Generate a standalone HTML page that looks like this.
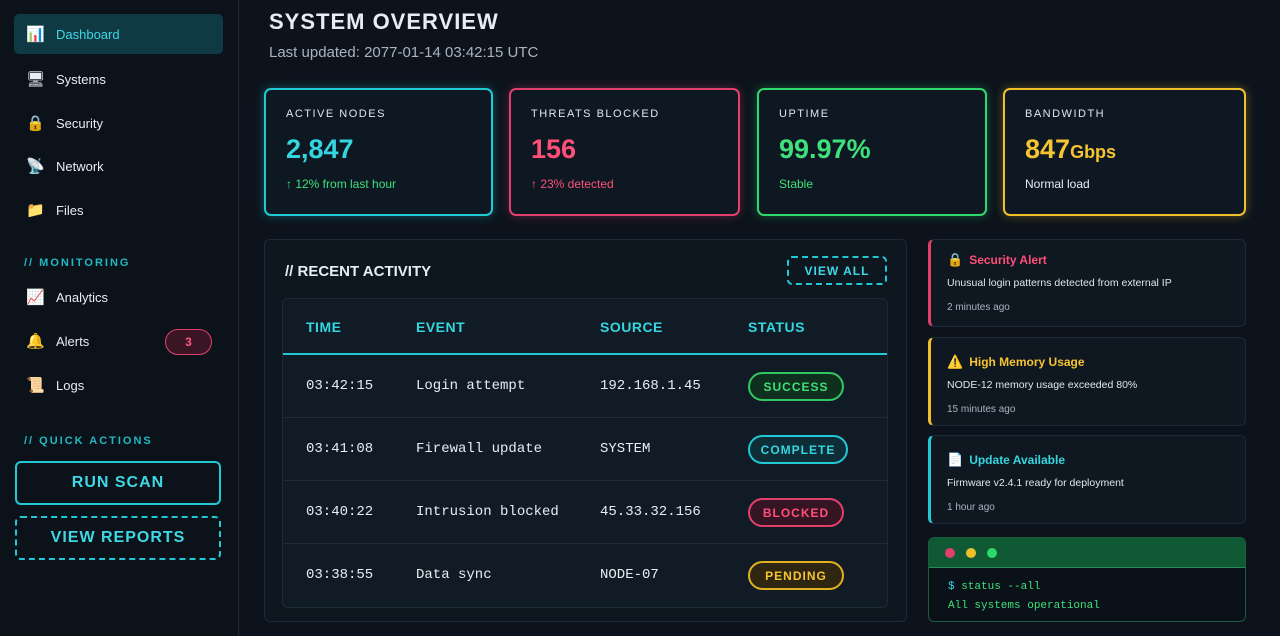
<!DOCTYPE html>
<html><head><meta charset="utf-8"><style>
*{box-sizing:border-box;margin:0;padding:0}
body{width:1280px;height:636px;overflow:hidden;background:#0c131c;font-family:"Liberation Sans",sans-serif;color:#e6edf3;position:relative}
.abs{position:absolute}
.side{left:0;top:0;width:239px;height:636px;background:#0b121a;border-right:1px solid #1f2a35}
.nav{position:absolute;left:14px;width:209px;height:40px;display:flex;align-items:center;padding-left:12px;font-size:13px;color:#e6edf3}
.nav .ic{width:18px;font-size:15px;margin-right:12px;text-align:center}
.sec{position:absolute;left:24px;font-size:11px;letter-spacing:2px;color:#22b8c4;font-weight:bold}
.btn{position:absolute;left:15px;width:206px;height:44px;border:2px solid #22c8d4;border-radius:6px;color:#3fd8e4;font-weight:bold;font-size:16px;letter-spacing:1px;display:flex;align-items:center;justify-content:center}
.card{position:absolute;top:88px;height:128px;border:2px solid;border-radius:7px;background:#0d1822;padding:18px 20px}
.card .l{font-size:11px;letter-spacing:1.5px;color:#dfe6ee}
.card .v{font-size:27px;font-weight:bold;margin-top:14px}
.card .s{font-size:12px;margin-top:12px}
.panel{position:absolute;border:1px solid #1e2a36;border-radius:6px;background:#0e161f}
.row{position:absolute;left:0;width:604px;height:63px;border-bottom:1px solid #1f2a35;font-family:"Liberation Mono",monospace;font-size:14px;color:#e6edf3}
.row span{position:absolute;top:23px}
.pill{position:absolute;top:17px;left:465px;width:96px;height:29px;border:2px solid;border-radius:15px;font-family:"Liberation Sans",sans-serif;font-size:12px;font-weight:bold;letter-spacing:1px;display:flex;align-items:center;justify-content:center}
.alert{position:absolute;left:928px;width:318px;border:1px solid #1e2a36;border-left:3px solid;border-radius:6px;background:#0f1720;padding:12px 16px}
.alert .t{font-size:12px;font-weight:bold;display:flex;align-items:center}
.alert .t i{font-style:normal;margin-right:6px;font-size:13px}
.alert .d{font-size:10.5px;color:#dfe6ee;margin-top:9px}
.alert .m{font-size:10px;color:#aab4be;margin-top:13px}
</style></head><body>
<div class="abs side"></div>
<div class="nav" style="top:14px;background:#0f3a44;border-radius:5px;color:#3fd8e4"><span class="ic">📊</span>Dashboard</div>
<div class="nav" style="top:59px"><span class="ic">🖥</span>Systems</div>
<div class="nav" style="top:103px"><span class="ic">🔒</span>Security</div>
<div class="nav" style="top:146px"><span class="ic">📡</span>Network</div>
<div class="nav" style="top:190px"><span class="ic">📁</span>Files</div>
<div class="sec" style="top:257px">// MONITORING</div>
<div class="nav" style="top:277px"><span class="ic">📈</span>Analytics</div>
<div class="nav" style="top:321px"><span class="ic">🔔</span>Alerts</div>
<div class="abs" style="left:165px;top:329px;width:47px;height:26px;border:1.5px solid #e0406a;background:#3a1524;border-radius:13px;color:#ff5a80;font-size:12px;font-weight:bold;display:flex;align-items:center;justify-content:center">3</div>
<div class="nav" style="top:365px"><span class="ic">📜</span>Logs</div>
<div class="sec" style="top:435px">// QUICK ACTIONS</div>
<div class="btn" style="top:461px">RUN SCAN</div>
<div class="btn" style="top:516px;border-style:dashed">VIEW REPORTS</div>

<div class="abs" style="left:269px;top:9px;font-size:22px;font-weight:bold;letter-spacing:1px">SYSTEM OVERVIEW</div>
<div class="abs" style="left:269px;top:44px;font-size:15px;color:#aab4be">Last updated: 2077-01-14 03:42:15 UTC</div>

<div class="card" style="left:264px;width:229px;border-color:#22c8d4;box-shadow:0 0 10px rgba(34,200,212,.35)"><div class="l">ACTIVE NODES</div><div class="v" style="color:#35d6e0">2,847</div><div class="s" style="color:#3ee07a">↑ 12% from last hour</div></div>
<div class="card" style="left:509px;width:231px;border-color:#e0406a;box-shadow:0 0 10px rgba(224,64,106,.35)"><div class="l">THREATS BLOCKED</div><div class="v" style="color:#ff4f78">156</div><div class="s" style="color:#ff4f78">↑ 23% detected</div></div>
<div class="card" style="left:757px;width:230px;border-color:#2fd86a;box-shadow:0 0 10px rgba(47,216,106,.35)"><div class="l">UPTIME</div><div class="v" style="color:#3ee07a">99.97%</div><div class="s" style="color:#3ee07a">Stable</div></div>
<div class="card" style="left:1003px;width:243px;border-color:#f0c02a;box-shadow:0 0 10px rgba(240,192,42,.35)"><div class="l">BANDWIDTH</div><div class="v" style="color:#f5c430">847<span style="font-size:18px">Gbps</span></div><div class="s" style="color:#e6edf3">Normal load</div></div>

<div class="panel" style="left:264px;top:239px;width:643px;height:383px"></div>
<div class="abs" style="left:285px;top:263px;font-size:15px;font-weight:bold">// RECENT ACTIVITY</div>
<div class="abs" style="left:787px;top:256px;width:100px;height:29px;border:2px dashed #22c8d4;border-radius:5px;color:#3fd8e4;font-size:12px;font-weight:bold;letter-spacing:1px;display:flex;align-items:center;justify-content:center">VIEW ALL</div>
<div class="panel" style="left:282px;top:298px;width:606px;height:310px;background:#111b25">
<div style="position:absolute;left:0;top:0;width:604px;height:56px;border-bottom:2px solid #22c8d4;color:#35d6e0;font-size:14px;font-weight:bold;letter-spacing:.5px">
<span style="position:absolute;left:23px;top:20px">TIME</span><span style="position:absolute;left:133px;top:20px">EVENT</span><span style="position:absolute;left:317px;top:20px">SOURCE</span><span style="position:absolute;left:465px;top:20px">STATUS</span></div>
<div class="row" style="top:56px"><span style="left:23px">03:42:15</span><span style="left:133px">Login attempt</span><span style="left:317px">192.168.1.45</span><div class="pill" style="color:#3ee07a;border-color:#2fc862;background:#10301f">SUCCESS</div></div>
<div class="row" style="top:119px"><span style="left:23px">03:41:08</span><span style="left:133px">Firewall update</span><span style="left:317px">SYSTEM</span><div class="pill" style="width:100px;color:#35d6e0;border-color:#22c8d4;background:#0f2d36">COMPLETE</div></div>
<div class="row" style="top:182px"><span style="left:23px">03:40:22</span><span style="left:133px">Intrusion blocked</span><span style="left:317px">45.33.32.156</span><div class="pill" style="color:#ff4f78;border-color:#e0406a;background:#351524">BLOCKED</div></div>
<div class="row" style="top:245px;border:none"><span style="left:23px">03:38:55</span><span style="left:133px">Data sync</span><span style="left:317px">NODE-07</span><div class="pill" style="color:#f5c430;border-color:#e0b020;background:#2e2610">PENDING</div></div>
</div>

<div class="alert" style="top:239px;height:88px;border-left-color:#e0406a"><div class="t" style="color:#ff4f78"><i>🔒</i>Security Alert</div><div class="d">Unusual login patterns detected from external IP</div><div class="m">2 minutes ago</div></div>
<div class="alert" style="top:337px;height:89px;border-left-color:#f0c02a"><div class="t" style="color:#f5c430;margin-top:4px"><i>⚠️</i>High Memory Usage</div><div class="d">NODE-12 memory usage exceeded 80%</div><div class="m">15 minutes ago</div></div>
<div class="alert" style="top:435px;height:89px;border-left-color:#22c8d4"><div class="t" style="color:#35d6e0;margin-top:4px"><i>📄</i>Update Available</div><div class="d">Firmware v2.4.1 ready for deployment</div><div class="m">1 hour ago</div></div>

<div class="abs" style="left:928px;top:537px;width:318px;height:85px;border:1px solid #1f5a3a;border-radius:6px;background:#0a1118;overflow:hidden">
<div style="height:30px;background:#0f5a34;border-bottom:1px solid #2a8a55;position:relative">
<span style="position:absolute;left:16px;top:10px;width:10px;height:10px;border-radius:50%;background:#e0406a"></span>
<span style="position:absolute;left:37px;top:10px;width:10px;height:10px;border-radius:50%;background:#f0c02a"></span>
<span style="position:absolute;left:58px;top:10px;width:10px;height:10px;border-radius:50%;background:#2fd86a"></span></div>
<div style="font-family:'Liberation Mono',monospace;font-size:11px;color:#3ee07a;padding:10px 0 0 19px;line-height:19px"><span style="color:#35d6e0">$</span> status --all<br>All systems operational</div>
</div>
</body></html>
